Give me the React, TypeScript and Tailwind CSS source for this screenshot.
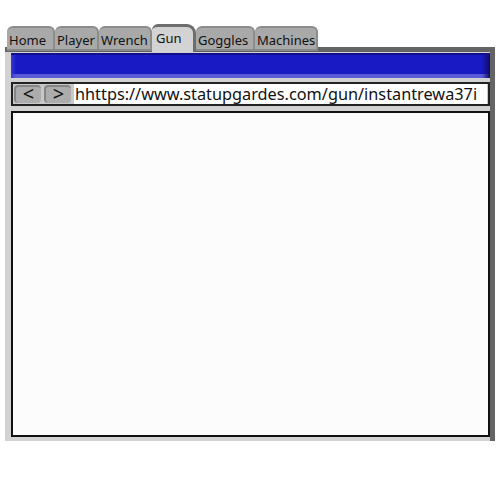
import React from "react";

const tabs = [
  { label: "Home", w: 48 },
  { label: "Player", w: 44 },
  { label: "Wrench", w: 53 },
  { label: "Gun", w: 44, active: true },
  { label: "Goggles", w: 59 },
  { label: "Machines", w: 63 },
];

export default function App() {
  return (
    <div
      className="w-[500px] h-[500px] bg-white overflow-hidden"
      style={{ fontFamily: '"Noto Sans", "DejaVu Sans", sans-serif' }}
    >
      <div className="flex items-end h-[52px] pl-[7px] relative z-10">
        {tabs.map((t) =>
          t.active ? (
            <div
              key={t.label}
              className="h-[28px] bg-[#d3d3d3] border-t-[3px] border-r-[3px] border-[#6e6e6e] rounded-tr-[9px] rounded-tl-[6px] text-[13px] leading-none text-[#111] pl-[4px] pt-[5px] box-border"
              style={{ width: t.w }}
            >
              {t.label}
            </div>
          ) : (
            <div
              key={t.label}
              className="h-[23px] mb-[3px] bg-[#a9a9a9] border-t-[2px] border-r-[2px] border-[#8c8c8c] rounded-t-[6px] text-[13px] leading-none text-[#111] pl-[2px] pt-[6px] box-border shadow-[0_2px_0_#8a8a8a]"
              style={{ width: t.w }}
            >
              {t.label}
            </div>
          )
        )}
      </div>
      <div className="ml-[5px] w-[490px] h-[394px] -mt-[5px] bg-[#d2d2d2] border-t-[5px] border-r-[5px] border-[#646464] pl-[6px] pt-[1px] pb-[4px] flex flex-col box-border">
        <div className="h-[25px] w-[479px] bg-[#1a1ac4] border-t-[2px] border-[#10108e] relative shrink-0">
          <div className="absolute left-0 right-0 bottom-0 h-[4px] bg-[#5a5ad6]" />
          <div className="absolute left-0 top-0 bottom-0 w-[5px] bg-gradient-to-r from-[#3a3ad0] to-transparent" />
          <div className="absolute right-0 top-0 bottom-0 w-[8px] bg-gradient-to-r from-transparent to-[#0c0c60]" />
        </div>
        <div className="mt-[4px] h-[24px] w-[479px] border-2 border-[#222] bg-[#c8c8c8] flex items-center gap-[3px] pl-[1px] pr-[1px] shrink-0 box-border">
          <div className="w-[27px] h-[18px] rounded-[4px] bg-[#acacac] border-t-2 border-l-2 border-[#858585] flex items-center justify-center text-[20px] leading-none text-[#111] box-border pb-[2px]">
            &lt;
          </div>
          <div className="w-[27px] h-[18px] rounded-[4px] bg-[#acacac] border-t-2 border-l-2 border-[#858585] flex items-center justify-center text-[20px] leading-none text-[#111] box-border pb-[2px]">
            &gt;
          </div>
          <div className="flex-1 h-[20px] bg-white overflow-hidden whitespace-nowrap text-[16.3px] leading-[20px] text-[#111] pl-[1px]">
            hhttps://www.statupgardes.com/gun/instantrewa37i
          </div>
        </div>
        <div className="mt-[5px] flex-1 w-[479px] border-2 border-[#111] bg-[#fcfcfc] box-border" />
      </div>
    </div>
  );
}
